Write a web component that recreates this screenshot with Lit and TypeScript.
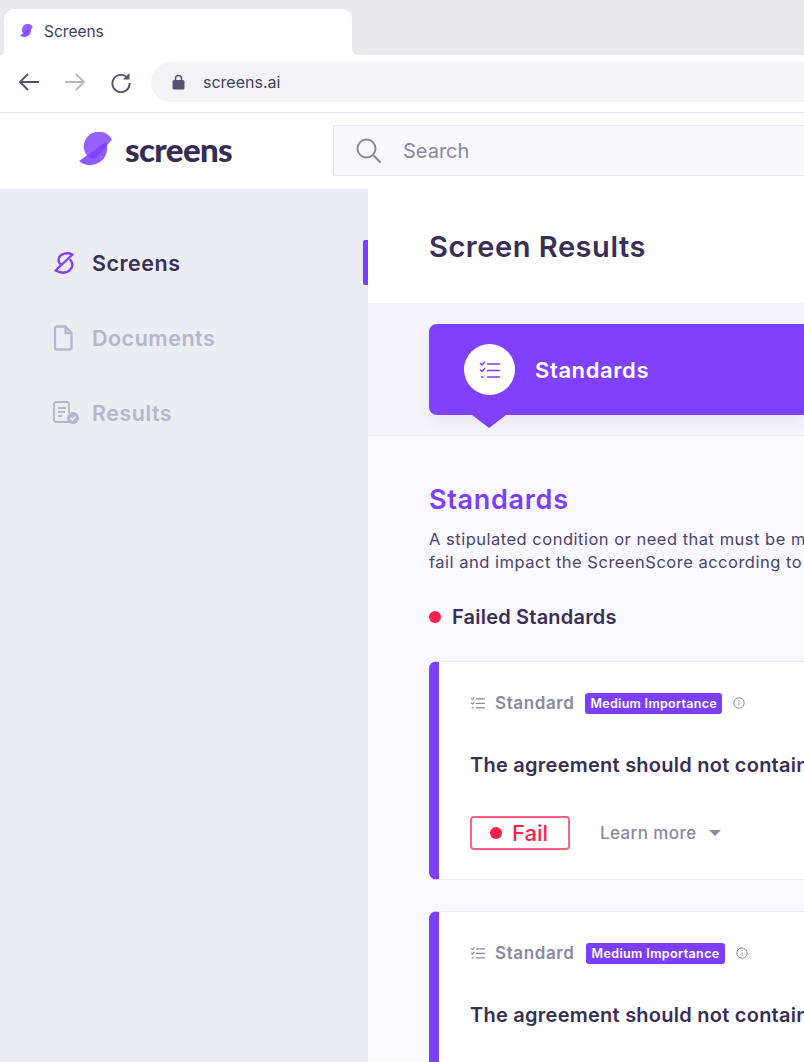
import { LitElement, html, css, svg } from "lit";
import { customElement } from "lit/decorators.js";

const logoShapes = svg`
  <path d="M33 7.500 A15 15 0 1 0 9 25 Q14 28 18 25 Z" fill="#7c3fff" opacity=".82"/>
  <path d="M0 29 L27 10 A17 17 0 0 1 0 29 Z" fill="#7c3fff" opacity=".85"/>
`;
const checklist = (c: string) => svg`
  <g fill="none" stroke="${c}" stroke-width="1.6" stroke-linecap="round" stroke-linejoin="round">
    <path d="M2 3.500l1.500 1.500L6 2.200M2 10l1.500 1.500L6 8.700"/>
    <path d="M9 4h12M9 10.500h12M9 17h12"/>
    <path d="M3 17h1.500"/>
  </g>`;

@customElement("app-root")
export class AppRoot extends LitElement {
  static styles = css`
    :host {
      display: block;
      width: 804px;
      height: 1062px;
      overflow: hidden;
      background: #fff;
      font-family: "Inter", "Liberation Sans", sans-serif;
      color: #372f55;
    }
    * { box-sizing: border-box; }
    svg { display: block; flex: none; }
    .strip { display: flex; height: 55px; background: #fff; }
    .strip-left { width: 4px; background: #e9e8ed; border-bottom-right-radius: 4px; }
    .strip-fill { flex: 1; background: #e9e8ed; border-bottom-left-radius: 6px; }
    .tab-top { width: 348px; background: #e9e8ed; }
    .tab {
      height: 46px; margin-top: 9px; background: #fff;
      border-radius: 10px 10px 0 0;
      display: flex; align-items: center; gap: 10px; padding: 0 0 2px 16px;
      font-size: 15.5px; color: #453e63;
    }
    .toolbar {
      height: 58px; border-bottom: 1px solid #e6e5ee;
      display: flex; align-items: flex-start; padding: 7px 0 0 18px;
    }
    .nav-btn { width: 46px; height: 40px; display: flex; align-items: center; }
    .pill {
      flex: 1; height: 40px; margin-left: -5px;
      background: #f3f3f5; border-radius: 20px 0 0 20px;
      display: flex; align-items: center; gap: 18px; padding-left: 21px;
      font-size: 16px; color: #453e63;
    }
    .header {
      height: 76px; display: flex; align-items: flex-start;
      padding: 12px 0 0 79px; background: #fff;
    }
    .brand { display: flex; align-items: center; gap: 10px; width: 254px; height: 51px; }
    .wordmark {
      font-family: "Lato", "Inter", sans-serif; font-size: 33px; font-weight: 900;
      letter-spacing: -0.6px; color: #352c54; line-height: 1; margin-top: -2px;
    }
    .search {
      flex: 1; height: 51px;
      background: #f8f7fc; border: 1px solid #e6e5ec; border-right: 0; border-radius: 3px 0 0 3px;
      display: flex; align-items: center; gap: 22px; padding-left: 22px;
      font-size: 20px; color: #8b88a4;
    }
    .body { display: flex; height: 873px; }
    .side { width: 368px; flex: none; background: #ecedf3; padding-top: 51px; display: flex; flex-direction: column; gap: 30px; }
    .item {
      height: 45px; display: flex; align-items: center; padding-left: 53px;
      font-size: 21.5px; letter-spacing: .5px; font-weight: 600; color: #b6b6cc;
    }
    .label { margin-top: 1px; }
    .item.on { color: #372f55; }
    .item .ico { width: 23px; margin-right: 16px; display: flex; }
    .marker { margin-left: auto; width: 5px; height: 45px; background: #7c3fff; border-radius: 2px 0 0 2px; }
    .main { flex: 1; min-width: 0; overflow: hidden; }
    .title {
      height: 114px; background: #fff; padding-left: 61px;
      display: flex; align-items: center;
      font-size: 29px; letter-spacing: .55px; font-weight: 600; color: #372f55;
    }
    .band { height: 133px; background: #f5f4fb; border-bottom: 1px solid #ecebf3; padding: 21px 0 0 61px; }
    .tabbar {
      position: relative; height: 91px; background: #7f40ff; border-radius: 8px 0 0 8px;
      display: flex; align-items: center; gap: 20px; padding-left: 35px;
      font-size: 22px; letter-spacing: .6px; font-weight: 600; color: #fff;
      box-shadow: 0 6px 14px rgba(60, 50, 110, .07);
    }
    .tabbar::after {
      content: ""; position: absolute; left: 43px; top: 91px;
      border-left: 17px solid transparent; border-right: 17px solid transparent; border-top: 13px solid #7f40ff;
    }
    .disc { width: 51px; height: 51px; border-radius: 50%; background: #fff; display: flex; align-items: center; justify-content: center; }
    .content { background: #f9f8fe; padding: 47px 0 0 61px; height: 626px; }
    h2 { margin: 0; font-size: 27px; letter-spacing: .7px; line-height: 34px; font-weight: 600; color: #7c3fff; }
    p { margin: 11px 0 0; font-size: 16.5px; letter-spacing: .5px; line-height: 23px; color: #4b4568; white-space: nowrap; }
    .failed { display: flex; align-items: center; gap: 11px; margin-top: 28px; height: 30px; font-size: 20px; letter-spacing: .2px; font-weight: 600; }
    .dot { width: 12px; height: 12px; border-radius: 50%; background: #ff1f4b; flex: none; }
    .card {
      height: 219px; margin-top: 29px; background: #fff;
      border: 1px solid #ececf3; border-left: 10px solid #7c3fff; border-right: 0;
      border-radius: 8px 0 0 8px;
      padding: 29px 0 0 31px;
    }
    .card + .card { margin-top: 31px; }
    .meta { display: flex; align-items: center; height: 24px; font-size: 17px; letter-spacing: .6px; font-weight: 600; color: #8b88a4; }
    .meta svg:first-child { margin-right: 9px; }
    .badge {
      margin-left: 11px; height: 21px; padding: 0 5px; border-radius: 3px;
      background: #7c3fff; color: #fff; font-size: 12.5px; letter-spacing: .3px; font-weight: 600;
      display: flex; align-items: center;
    }
    .wide .badge { margin-left: 12px; letter-spacing: .4px; }
    .info { margin-left: 11px; }
    .claim { margin-top: 35px; font-size: 20px; letter-spacing: .25px; line-height: 30px; font-weight: 600; white-space: nowrap; }
    .foot { display: flex; align-items: center; margin-top: 36px; }
    .fail {
      width: 100px; height: 34px; border: 2px solid #ff6480; border-radius: 4px;
      display: flex; align-items: center; justify-content: center; gap: 10px; padding-right: 2px;
      font-size: 22px; font-weight: 500; color: #ff1f4b;
    }
    .learn { margin-left: 30px; font-size: 17px; letter-spacing: .4px; font-weight: 500; color: #8b88a4; }
    .caret { margin-left: 12px; width: 0; height: 0; border-left: 6px solid transparent; border-right: 6px solid transparent; border-top: 6px solid #8b88a4; }
  `;

  private card(fail: boolean) {
    return html`<div class="card ${fail ? "" : "wide"}">
      <div class="meta">
        <svg width="16" height="14" viewBox="0 0 23 20">${checklist("#8b88a4")}</svg>
        Standard
        <span class="badge">Medium Importance</span>
        <svg class="info" width="12" height="12" viewBox="0 0 12 12" fill="none" stroke="#8b88a4"><circle cx="6" cy="6" r="5.200"/><path d="M6 5.500v3M6 3.200v1"/></svg>
      </div>
      <div class="claim">The agreement should not contain a clause</div>
      ${fail ? html`<div class="foot">
        <div class="fail"><span class="dot"></span>Fail</div>
        <span class="learn">Learn more</span><span class="caret"></span>
      </div>` : ""}
    </div>`;
  }

  render() {
    return html`
      <div class="strip">
        <div class="strip-left"></div>
        <div class="tab-top"><div class="tab">
          <svg width="14" height="15" viewBox="0 0 36 38">${logoShapes}</svg>Screens
        </div></div>
        <div class="strip-fill"></div>
      </div>
      <div class="toolbar">
        <div class="nav-btn"><svg width="22" height="20" viewBox="0 0 22 20" fill="none" stroke="#575273" stroke-width="1.800"><path d="M21 10H2M10 2l-8 8 8 8"/></svg></div>
        <div class="nav-btn"><svg width="22" height="20" viewBox="0 0 22 20" fill="none" stroke="#b6b6c8" stroke-width="1.800"><path d="M1 10h19M12 2l8 8-8 8"/></svg></div>
        <div class="nav-btn"><svg width="22" height="22" viewBox="0 0 22 22" fill="none" stroke="#575273" stroke-width="1.900"><path d="M18 7.500A8.600 8.600 0 1 0 19.600 12"/><path d="M19.500 2v6.500H13" fill="#575273" stroke="none"/></svg></div>
        <div class="pill">
          <svg width="13" height="16" viewBox="0 0 13 16"><path d="M3.500 7V4.500a3 3 0 0 1 6 0V7" fill="none" stroke="#575273" stroke-width="1.500"/><rect x="0.500" y="6" width="12" height="9.500" rx="1.500" fill="#575273"/></svg>
          screens.ai
        </div>
      </div>
      <div class="header">
        <div class="brand">
          <svg width="36" height="38" viewBox="0 0 36 38">${logoShapes}</svg>
          <span class="wordmark">screens</span>
        </div>
        <div class="search">
          <svg width="25" height="25" viewBox="0 0 25 25" fill="none" stroke="#8b88a4" stroke-width="2"><circle cx="10.500" cy="10.500" r="9"/><path d="M17 17l7 7" stroke-linecap="round"/></svg>
          Search
        </div>
      </div>
      <div class="body">
        <div class="side">
          <div class="item on">
            <span class="ico"><svg width="22" height="23" viewBox="0 0 22 23" fill="none" stroke="#7c3fff" stroke-width="2.300" stroke-linecap="round" stroke-linejoin="round"><path d="M7.500 13.500C5.500 11.500 5 9.500 6 7 7.500 2.500 14 1 19.500 3.500L2.500 19.500C7 22 12.500 22.500 16.500 19.500c3.500-3 3.500-7 1-10.500"/></svg></span>
            <span class="label">Screens</span><span class="marker"></span>
          </div>
          <div class="item">
            <span class="ico"><svg width="20" height="26" viewBox="0 0 20 26" fill="none" stroke="#b6b6cc" stroke-width="2.300" stroke-linejoin="round"><path d="M2 3.500a2 2 0 0 1 2-2h8.500L18.500 8v14.500a2 2 0 0 1-2 2H4a2 2 0 0 1-2-2z"/><path d="M12.500 1.500V8h6" /></svg></span>
            <span class="label">Documents</span>
          </div>
          <div class="item">
            <span class="ico"><svg width="26" height="24" viewBox="0 0 26 24" fill="none" stroke="#b6b6cc" stroke-width="1.800"><path d="M16 21H3a2 2 0 0 1-2-2V3a2 2 0 0 1 2-2h11a2 2 0 0 1 2 2v9"/><path d="M5 7h8M5 11h7M5 15h4"/><circle cx="20" cy="17" r="6" fill="#b6b6cc" stroke="none"/><path d="M17.500 17l2 2 3-3.500" stroke="#ecedf3"/></svg></span>
            <span class="label">Results</span>
          </div>
        </div>
        <div class="main">
          <div class="title">Screen Results</div>
          <div class="band">
            <div class="tabbar">
              <div class="disc"><svg width="24" height="20" viewBox="0 0 23 20">${checklist("#7f40ff")}</svg></div>
              Standards
            </div>
          </div>
          <div class="content">
            <h2>Standards</h2>
            <p>A stipulated condition or need that must be met by a document to pass or<br>fail and impact the ScreenScore according to its importance level.</p>
            <div class="failed"><span class="dot"></span>Failed Standards</div>
            ${this.card(true)}
            ${this.card(false)}
          </div>
        </div>
      </div>
    `;
  }
}
